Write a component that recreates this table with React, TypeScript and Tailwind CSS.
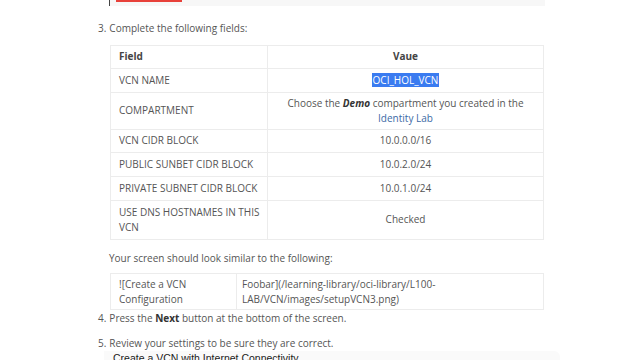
import React from "react";

const font = { fontFamily: '"Open Sans", "Noto Sans", sans-serif' };

export default function App() {
  const rows: { f: React.ReactNode; v: React.ReactNode; h: string }[] = [
    {
      f: "VCN NAME",
      v: (
        <span className="bg-[#3a7bf0] text-white px-[1px]">OCI_HOL_VCN</span>
      ),
      h: "h-[24px]",
    },
    {
      f: "COMPARTMENT",
      v: (
        <span>
          Choose the <b className="italic text-[#333]">Demo</b> compartment you created in the
          <br />
          <span className="text-[#3c6aa6]">Identity Lab</span>
        </span>
      ),
      h: "h-[37px]",
    },
    { f: "VCN CIDR BLOCK", v: "10.0.0.0/16", h: "h-[23px]" },
    { f: "PUBLIC SUNBET CIDR BLOCK", v: "10.0.2.0/24", h: "h-[24px]" },
    { f: "PRIVATE SUBNET CIDR BLOCK", v: "10.0.1.0/24", h: "h-[24px]" },
    {
      f: (
        <span>
          USE DNS HOSTNAMES IN THIS
          <br />
          VCN
        </span>
      ),
      v: "Checked",
      h: "h-[38px]",
    },
  ];

  return (
    <div
      className="w-[640px] h-[360px] overflow-hidden bg-white relative text-[10px] leading-[14.5px] text-[#555]"
      style={font}
    >
      {/* top remnant box */}
      <div className="ml-[109px] w-[436px] h-[6px] bg-[#f7f7f7] border-l border-[#444] relative">
        <div className="absolute left-[6px] top-0 w-[66px] h-[2px] bg-[#e8413a]" />
      </div>

      <div className="ml-[98px] mt-[15px] flex gap-[3px]">
        <span>3.</span>
        <span>Complete the following fields:</span>
      </div>

      {/* main table */}
      <div className="ml-[110px] mt-[9px] w-[434px] border border-[#ececec]">
        <div className="flex h-[23px] border-b border-[#ececec] font-bold text-[#444]">
          <div className="w-[157px] border-r border-[#ececec] pl-[8px] flex items-center">Field</div>
          <div className="flex-1 flex items-center justify-center">Vaue</div>
        </div>
        {rows.map((r, i) => (
          <div
            key={i}
            className={`flex ${r.h} ${i < rows.length - 1 ? "border-b border-[#ececec]" : ""}`}
          >
            <div className="w-[157px] border-r border-[#ececec] pl-[8px] flex items-center">{r.f}</div>
            <div className="flex-1 flex items-center justify-center text-center">{r.v}</div>
          </div>
        ))}
      </div>

      <div className="ml-[109px] mt-[11px]">Your screen should look similar to the following:</div>

      <div className="ml-[110px] mt-[8px] w-[434px] h-[37px] border border-[#ececec] flex">
        <div className="w-[126px] border-r border-[#ececec] pl-[8px] flex items-center">
          <span>
            ![Create a VCN
            <br />
            Configuration
          </span>
        </div>
        <div className="flex-1 pl-[5px] flex items-center">
          <span>
            Foobar](/learning-library/oci-library/L100-
            <br />
            LAB/VCN/images/setupVCN3.png)
          </span>
        </div>
      </div>

      <div className="ml-[98px] mt-[1px] flex gap-[3px]">
        <span>4.</span>
        <span>
          Press the <b className="text-[#333]">Next</b> button at the bottom of the screen.
        </span>
      </div>

      <div className="ml-[98px] mt-[10px] flex gap-[3px]">
        <span>5.</span>
        <span>Review your settings to be sure they are correct.</span>
      </div>

      <div className="ml-[104px] mt-[1px] w-[456px] h-[20px] bg-[#fafafa] rounded-tr-[6px] pl-[9px]">
        <span
          className="text-[10.5px] leading-[14px] text-[#1a1a1a]"
          style={{ fontFamily: '"Liberation Sans", Arial, sans-serif' }}
        >
          Create a VCN with Internet Connectivity
        </span>
      </div>
    </div>
  );
}
